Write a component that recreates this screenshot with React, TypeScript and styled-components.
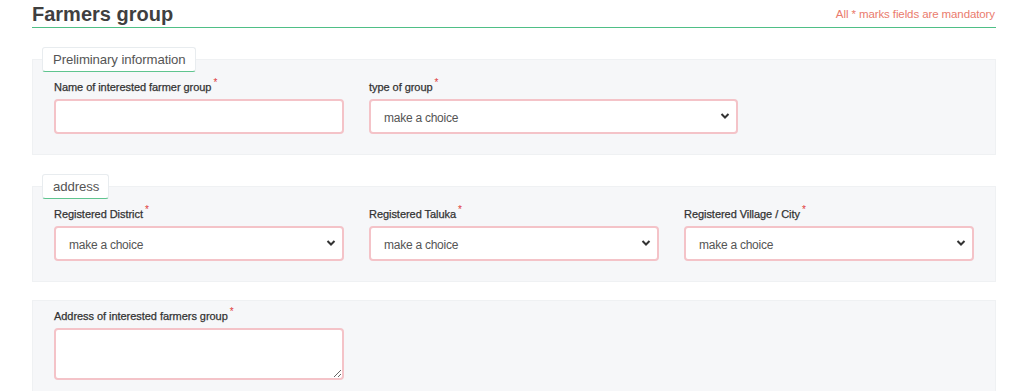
import * as React from "react";
import styled, { createGlobalStyle } from "styled-components";

const GlobalStyle = createGlobalStyle`
  html, body {
    margin: 0;
    padding: 0;
    background: #fff;
    font-family: "Liberation Sans", Arial, sans-serif;
  }
`;

const Page = styled.div`
  padding: 0 28px 0 32px;
`;

const Header = styled.div`
  display: flex;
  align-items: flex-end;
  justify-content: space-between;
  height: 27px;
  border-bottom: 1px solid #4fbf86;
`;

const Title = styled.h1`
  margin: 0;
  font-size: 20px;
  line-height: 25px;
  font-weight: 700;
  color: #3f3f3f;
`;

const Mandatory = styled.span`
  font-size: 11.5px;
  line-height: 14px;
  margin: 0 1px 6px 0;
  color: #ea7b6d;
  letter-spacing: -0.1px;
`;

const Section = styled.section<{ $top: number }>`
  margin-top: ${(p) => p.$top}px;
  display: flex;
  flex-direction: column;
`;

const Tab = styled.div`
  position: relative;
  z-index: 1;
  align-self: flex-start;
  margin: 0 0 -13px 10px;
  height: 23px;
  padding: 0 9px 0 10px;
  display: flex;
  align-items: center;
  background: #fff;
  border: 1px solid #e8ecef;
  border-bottom: 1px solid #5fc48f;
  border-radius: 3px;
  font-size: 13.2px;
  color: #555;
  letter-spacing: -0.1px;
`;

const Panel = styled.div<{ $padTop: number }>`
  background: #f6f7f9;
  border: 1px solid #eff1f3;
  padding: ${(p) => p.$padTop}px 21px 20px;
  display: grid;
  grid-template-columns: repeat(12, 1fr);
  column-gap: 25px;
  width: 920px;
`;

const Field = styled.div<{ $span: number }>`
  grid-column: span ${(p) => p.$span};
  display: flex;
  flex-direction: column;
`;

const Label = styled.label`
  font-size: 11px;
  line-height: 14px;
  color: #333;
  letter-spacing: -0.05px;
  margin-bottom: 5px;
  -webkit-text-stroke: 0.25px #333;
`;

const Star = styled.sup`
  color: #e03a3a;
  font-size: 10px;
  line-height: 0;
  margin-left: 2px;
  -webkit-text-stroke: 0;
`;

const fieldBox = `
  box-sizing: border-box;
  width: 100%;
  border: 2px solid #f4c3c8;
  border-radius: 4px;
  background: #fff;
  font-family: "Liberation Sans", Arial, sans-serif;
  font-size: 12px;
  color: #555;
  outline: none;
`;

const TextInput = styled.input`
  ${fieldBox}
  height: 35px;
  padding: 0 14px;
`;

const SelectWrap = styled.div`
  position: relative;
`;

const Select = styled.select`
  ${fieldBox}
  height: 35px;
  padding: 2px 13px 0;
  appearance: none;
  letter-spacing: -0.25px;
`;

const Chevron = styled.svg`
  position: absolute;
  right: 8px;
  top: 13px;
  pointer-events: none;
`;

const TextArea = styled.textarea`
  ${fieldBox}
  height: 52px;
  padding: 6px 14px;
  resize: vertical;
  display: block;
`;

function Required({ children }: { children: React.ReactNode }) {
  return (
    <Label>
      {children}
      <Star>*</Star>
    </Label>
  );
}

function ChoiceSelect() {
  return (
    <SelectWrap>
      <Select defaultValue="">
        <option value="">make a choice</option>
      </Select>
      <Chevron width="10" height="8" viewBox="0 0 10 8">
        <path d="M1.5 2 L5 5.5 L8.5 2" fill="none" stroke="#333" strokeWidth="2" />
      </Chevron>
    </SelectWrap>
  );
}

export default function App() {
  return (
    <Page>
      <GlobalStyle />
      <Header>
        <Title>Farmers group</Title>
        <Mandatory>All * marks fields are mandatory</Mandatory>
      </Header>

      <Section $top={19}>
        <Tab>Preliminary information</Tab>
        <Panel $padTop={20}>
          <Field $span={4}>
            <Required>Name of interested farmer group</Required>
            <TextInput />
          </Field>
          <Field $span={5}>
            <Required>type of group</Required>
            <ChoiceSelect />
          </Field>
        </Panel>
      </Section>

      <Section $top={19}>
        <Tab>address</Tab>
        <Panel $padTop={20}>
          <Field $span={4}>
            <Required>Registered District</Required>
            <ChoiceSelect />
          </Field>
          <Field $span={4}>
            <Required>Registered Taluka</Required>
            <ChoiceSelect />
          </Field>
          <Field $span={4}>
            <Required>Registered Village / City</Required>
            <ChoiceSelect />
          </Field>
        </Panel>
      </Section>

      <Section $top={18}>
        <Panel $padTop={8}>
          <Field $span={4}>
            <Required>Address of interested farmers group</Required>
            <TextArea />
          </Field>
        </Panel>
      </Section>
    </Page>
  );
}
